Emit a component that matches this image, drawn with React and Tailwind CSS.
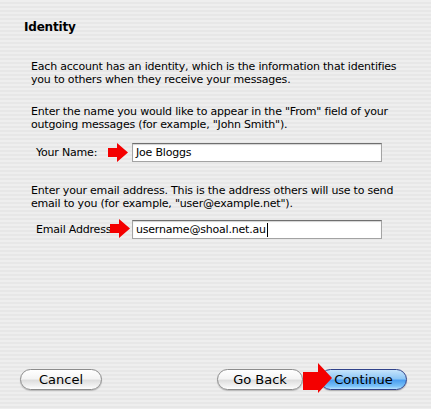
import React from "react";

const font = { fontFamily: '"DejaVu Sans", "Liberation Sans", sans-serif' };

function RedArrow({ className, w, h, tail }) {
  // tail: [shaft end x, shaft top y, shaft bottom y]
  const [tx, ty1, ty2] = tail;
  return (
    <svg className={className} width={w} height={h} viewBox={`0 0 ${w} ${h}`}>
      <polygon
        points={`0,${ty1} ${tx},${ty1} ${tx},0 ${w},${h / 2} ${tx},${h} ${tx},${ty2} 0,${ty2}`}
        fill="#f40000"
      />
    </svg>
  );
}

function Field({ label, value, caret }) {
  return (
    <div className="flex items-center h-[19px]">
      <div className="w-[101px] pl-[5px] text-[11px] text-black whitespace-nowrap">{label}</div>
      <div className="h-[19px] w-[250px] bg-white border border-[#a3a3a3] border-t-[#6f6f6f] shadow-[inset_0_1px_1px_rgba(0,0,0,0.18)] flex items-center pl-[3px] text-[11px] text-black">
        {value}
        {caret && <span className="inline-block w-px h-[14px] bg-black ml-px" />}
      </div>
    </div>
  );
}

export default function App() {
  return (
    <div
      className="w-[431px] h-[409px] flex flex-col text-black bg-[repeating-linear-gradient(to_bottom,#eeeeee_0px,#eeeeee_2px,#e7e7e7_2px,#e7e7e7_4px)]"
      style={font}
    >
      <h1 className="pl-[24px] pt-[20px] text-[12px] leading-[15px] font-bold tracking-[-0.2px]">Identity</h1>

      <div className="pl-[31px] pr-[10px] text-[11px] leading-[13px] tracking-[-0.2px]">
        <p className="mt-[25px]">
          Each account has an identity, which is the information that identifies
          <br />
          you to others when they receive your messages.
        </p>
        <p className="mt-[19px]">
          Enter the name you would like to appear in the "From" field of your
          <br />
          outgoing messages (for example, "John Smith").
        </p>
        <div className="mt-[12px] relative">
          <Field label="Your Name:" value="Joe Bloggs" />
          <RedArrow className="absolute left-[77px] top-0" w={20} h={19} tail={[9, 5, 14]} />
        </div>
        <p className="mt-[22px]">
          Enter your email address. This is the address others will use to send
          <br />
          email to you (for example, "user@example.net").
        </p>
        <div className="mt-[10px] relative">
          <Field label="Email Address:" value="username@shoal.net.au" caret />
          <RedArrow className="absolute left-[79px] top-[-1px]" w={20} h={19} tail={[9, 5, 14]} />
        </div>
      </div>

      <div className="mt-auto mb-[19px] flex items-center pl-[20px] pr-[24px] text-[13px]">
        <button className="w-[82px] h-[21px] rounded-full border border-[#8c8c8c] bg-[linear-gradient(to_bottom,#ffffff_0%,#f4f4f4_45%,#dedede_55%,#f2f2f2_85%,#ffffff_100%)] shadow-[0_1px_1px_rgba(0,0,0,0.2)] leading-none">
          Cancel
        </button>
        <div className="ml-auto relative flex items-center gap-[17px]">
          <button className="w-[86px] h-[21px] rounded-full border border-[#8c8c8c] bg-[linear-gradient(to_bottom,#ffffff_0%,#f4f4f4_45%,#dedede_55%,#f2f2f2_85%,#ffffff_100%)] shadow-[0_1px_1px_rgba(0,0,0,0.2)] leading-none">
            Go Back
          </button>
          <button className="w-[87px] h-[21px] rounded-full border border-[#30428a] bg-[linear-gradient(to_bottom,#c6e4fb_0%,#8ec7f6_45%,#4d9ff0_55%,#79c1f8_85%,#b8e2ff_100%)] shadow-[0_1px_1px_rgba(0,0,0,0.25)] leading-none">
            Continue
          </button>
          <RedArrow className="absolute left-[86px] top-[-6px]" w={29} h={30} tail={[15, 9, 27]} />
        </div>
      </div>
    </div>
  );
}
